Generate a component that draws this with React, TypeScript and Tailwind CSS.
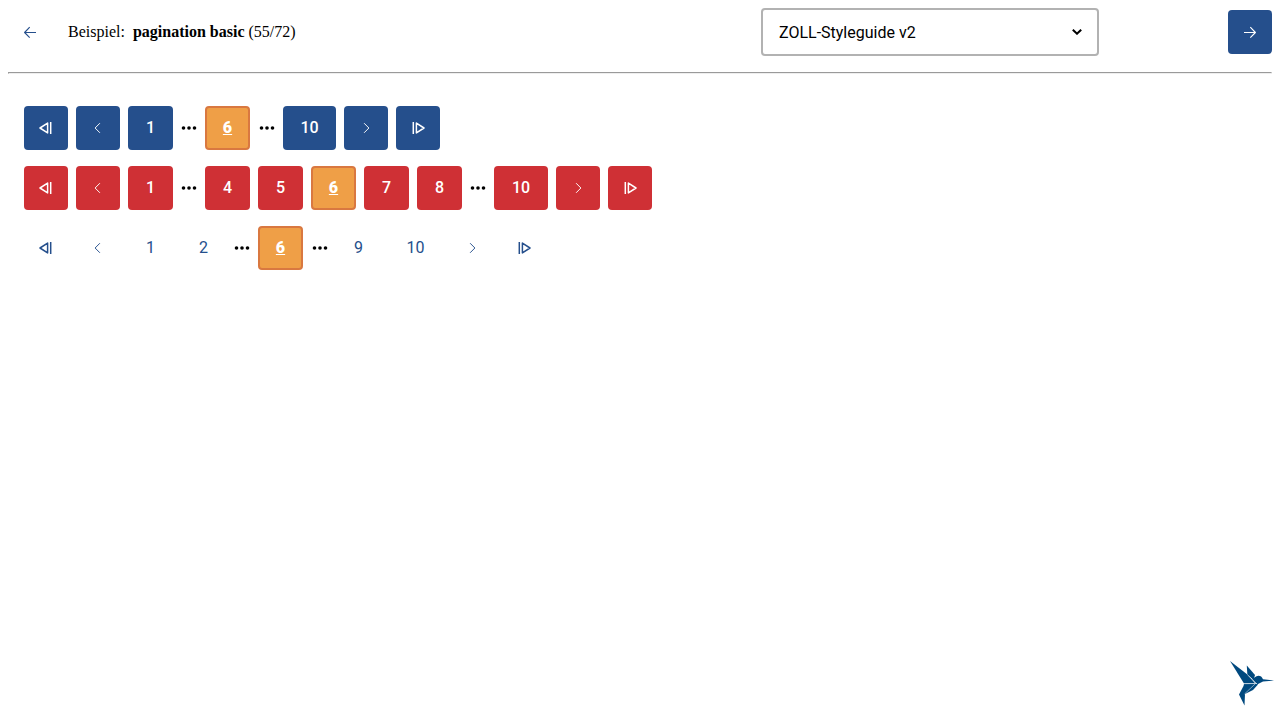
import React from "react";

type Item = string;
type Tone = "blue" | "red" | "plain";

const tones: Record<Tone, string> = {
  blue: "bg-[#254f8c] text-white",
  red: "bg-[#cf3035] text-white",
  plain: "text-[#254f8c]",
};

function Icon({ name }: { name: string }) {
  const flip = name === "last" || name === "next" || name === "right";
  const kind = name === "first" || name === "last" ? "skip" : name === "prev" || name === "next" ? "chevron" : "arrow";
  return (
    <svg
      className={flip ? "-scale-x-100 overflow-visible" : "overflow-visible"}
      width="12"
      height="12"
      viewBox="0 0 12 12"
      fill="none"
      stroke="currentColor"
      strokeLinejoin="round"
    >
      {kind === "skip" && (
        <>
          <path d="M7.6 1.1 0 6l7.6 4.9z" strokeWidth="1.5" />
          <path d="M10.7 0v12" strokeWidth="1.5" />
        </>
      )}
      {kind === "chevron" && <path d="M7.9 1.2 3.1 6l4.8 4.8" strokeWidth="0.95" />}
      {kind === "arrow" && <path d="M12 6.5H.7M5.7 1.2.6 6.5l5.1 5.1" strokeWidth="1.15" />}
    </svg>
  );
}

const box = "flex h-11 shrink-0 items-center justify-center rounded-[4px]";

function Pagination({ items, tone }: { items: Item[]; tone: Tone }) {
  return (
    <nav className="flex gap-2 font-[Roboto,sans-serif] text-base font-medium">
      {items.map((item, i) => {
        if (item.startsWith("dots")) {
          return (
            <span key={i} className={`flex h-11 items-center justify-center ${item === "dots-wide" ? "w-[17px]" : "w-4"}`}>
              <svg width="16" height="4" viewBox="0 0 16 4" fill="black">
                <circle cx="2.5" cy="2" r="1.8" />
                <circle cx="8" cy="2" r="1.8" />
                <circle cx="13.5" cy="2" r="1.8" />
              </svg>
            </span>
          );
        }
        if (item === "6") {
          return (
            <button key={i} className={`${box} w-[45px] border-2 border-[#d97840] bg-[#ef9f47] font-black text-white underline`}>
              6
            </button>
          );
        }
        const isIcon = isNaN(Number(item));
        const width = isIcon ? "w-11" : item === "10" ? (tone === "red" ? "w-[54px]" : "w-[53px]") : "w-[45px]";
        return (
          <button key={i} className={`${box} ${width} ${tones[tone]} ${tone === "plain" ? "font-normal" : ""}`}>
            {isIcon ? <Icon name={item} /> : item}
          </button>
        );
      })}
    </nav>
  );
}

export default function App() {
  return (
    <div className="flex h-[720px] flex-col bg-white px-2 pt-2 text-black">
      <header className="flex h-12 items-center">
        <button className={`${box} w-11 text-[#254f8c]`}>
          <Icon name="left" />
        </button>
        <p className="ml-4 whitespace-pre font-['Liberation_Serif',serif] text-base">
          Beispiel:{"  "}
          <b>pagination basic</b> (55/72)
        </p>
        <div className="ml-auto flex h-12 w-[338px] items-center justify-between rounded-[4px] border-2 border-[#b2b2b2] pr-[15px] pl-4 font-[Roboto,sans-serif] text-base">
          <span className="pt-0.5">ZOLL-Styleguide v2</span>
          <svg width="10" height="6" viewBox="0 0 10 6" fill="none" stroke="black" strokeWidth="2">
            <path d="m.8.7 4.2 4L9.2.7" />
          </svg>
        </div>
        <button className={`${box} ml-[129px] w-11 bg-[#254f8c] text-white`}>
          <Icon name="right" />
        </button>
      </header>
      <hr className="mt-4 h-0.5 border border-[#9a9a9a] border-r-[#eeeeee] border-b-[#eeeeee]" />
      <main className="flex flex-col gap-4 px-4 pt-8">
        <Pagination tone="blue" items={["first", "prev", "1", "dots", "6", "dots-wide", "10", "next", "last"]} />
        <Pagination tone="red" items={["first", "prev", "1", "dots", "4", "5", "6", "7", "8", "dots", "10", "next", "last"]} />
        <Pagination tone="plain" items={["first", "prev", "1", "2", "dots", "6", "dots-wide", "9", "10", "next", "last"]} />
      </main>
      <footer className="mt-auto -mr-2 flex justify-end pr-[6.5px] pb-[14px]">
        <svg width="44" height="45" viewBox="0 0 44 45" fill="#00497f">
          <path d="M0 0 18 14 25 22.3 14 22.6Z" />
          <path d="M16.8 4.5 25 14 23.5 19 17.3 13.2Z" />
          <path d="M22 18 26.5 15.2Q31 13.8 33 18.2L44 19.6 33 20.5 27 23.5Z" />
          <path d="M14 23 26 22.6 28 23.5 23 29 15 33 14.5 44.5 9 33.5 13.5 25Z" />
          <path d="M14 22.7 27 22.5M17.5 14 27 23M14.5 33 25 23" stroke="white" strokeWidth=".5" />
        </svg>
      </footer>
    </div>
  );
}
